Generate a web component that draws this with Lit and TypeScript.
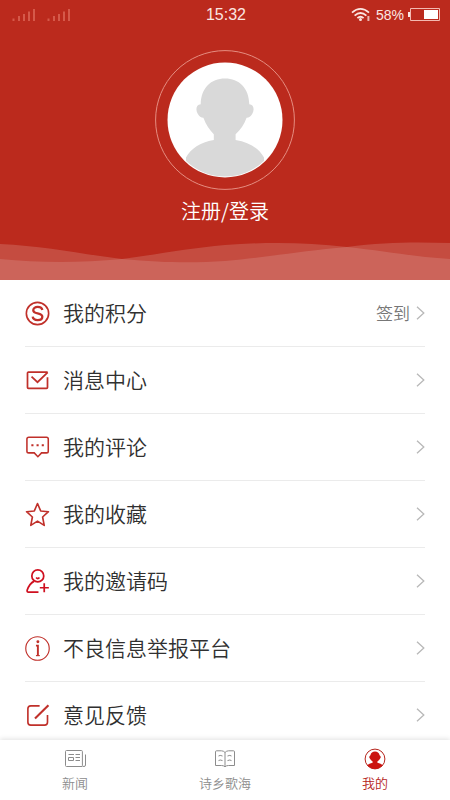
import { LitElement, html, css, svg, type TemplateResult } from "lit";
import { customElement, state } from "lit/decorators.js";

const signalBars = html`<svg width="24" height="14" viewBox="0 0 24 14" aria-hidden="true">
  <path d="M1.5 13V10.5M7 13V8M12 13V6M17 13V3.5M22 13V1" stroke="#d5594a" stroke-width="2" fill="none" />
</svg>`;

const menuIcons: Record<string, TemplateResult> = {
  points: svg`<circle cx="13" cy="13" r="11.6" stroke-width="1.7"/>
    <path d="M18 9.4C17.6 7.2 15.9 6.2 13.2 6.2C10.5 6.2 8.6 7.5 8.6 9.5C8.6 11.7 10.5 12.2 13.2 12.8C16.2 13.4 18 14.1 18 16.3C18 18.6 16 19.8 13.2 19.8C10.1 19.8 8.3 18.5 8 16.2" stroke-width="2.4"/>`,
  mail: svg`<path d="M23.5 4.4H3.5Q2.6 4.4 2.6 5.4V20.2Q2.6 21.2 3.6 21.2H22.4Q23.4 21.2 23.4 20.2V9.5" stroke-width="1.8"/>
    <path d="M6.8 9L13 14.8L23.6 4.6" stroke-width="1.8"/>`,
  comment: svg`<path d="M4 2.4H22.4Q24.2 2.4 24.2 4.2V16.8Q24.2 18.6 22.4 18.6H17.2L13.4 22.6L9.6 18.6H4Q2 18.6 2 16.8V4.2Q2 2.4 4 2.4Z" stroke-width="1.6"/>
    <path d="M6.6 9.5h2.2v2.2h-2.2zM12 9.5h2.2v2.2h-2.2zM17.4 9.5h2.2v2.2h-2.2z" fill="currentColor" stroke="none"/>`,
  star: svg`<path d="M13 1.6L16.3 9.3L24.4 10.1L18.3 15.6L20 24.3L13 19.9L6 24.3L7.7 15.6L1.6 10.1L9.7 9.3Z" stroke-width="1.7" stroke-linejoin="round"/>`,
  invite: svg`<g stroke="#cf1020" stroke-width="1.8"><circle cx="13.3" cy="7.2" r="6.2"/>
    <path d="M11.6 8.8Q13.3 11 15 8.8" />
    <path d="M9.6 12.6C5.8 14.5 3.6 18 2.2 22.2Q2 24 3.5 24H14M20 14.8V24.2M15.4 19.5H24.8"/></g>`,
  info: svg`<circle cx="13" cy="13" r="12.2" stroke-width="1.2"/>
    <path d="M11.4 10H13.4V20.4" stroke-width="2"/><path d="M11.4 20.4H15.4" stroke-width="1.2"/><circle cx="13.4" cy="6" r="1.5" fill="currentColor" stroke="none"/>`,
  edit: svg`<path d="M15.2 3H6Q3 3 3 6V20Q3 23 6 23H20.4Q23.4 23 23.4 20V12.4" stroke-width="1.7"/>
    <path d="M10.4 16L24.4 2.4" stroke-width="2.2"/>`,
};

interface MenuItem {
  icon: string;
  label: string;
  note?: string;
}

const menu: MenuItem[] = [
  { icon: "points", label: "我的积分", note: "签到" },
  { icon: "mail", label: "消息中心" },
  { icon: "comment", label: "我的评论" },
  { icon: "star", label: "我的收藏" },
  { icon: "invite", label: "我的邀请码" },
  { icon: "info", label: "不良信息举报平台" },
  { icon: "edit", label: "意见反馈" },
];

const tabs = [
  {
    label: "新闻",
    icon: svg`<path d="M18.4 18.5H2.5Q1.5 18.5 1.5 17.5V3.5Q1.5 2.5 2.5 2.5H17.4Q18.4 2.5 18.4 3.5V17.5Q18.4 18.5 20 18.5Q21.5 18.5 21.5 17V6.5"/>
      <path d="M4.5 6.5H10M11.5 6.5H16M4.5 9.5H9.5V12.5H4.5ZM11.5 9.5H16M11.5 12.5H16"/>`,
  },
  {
    label: "诗乡歌海",
    icon: svg`<path d="M11 4.5Q9.5 2.8 7.5 2.8H2.5Q1.5 2.8 1.5 3.8V17.5H7.5Q9.7 17.5 11 18.8Q12.3 17.5 14.5 17.5H20.5V3.8Q20.5 2.8 19.5 2.8H14.5Q12.5 2.8 11 4.5V18"/>
      <path d="M4.5 8L6.2 7.4L8.5 8M4.5 12.6L6.2 12L8.5 12.6M13.5 8L15.8 7.4L17.5 8M13.5 12.6L15.8 12L17.5 12.6"/>`,
  },
  {
    label: "我的",
    icon: svg`<circle cx="11" cy="11" r="9.9"/>
      <path d="M11 3.6C13.4 3.6 15 4.8 15.6 7.2Q17.2 8.4 16.6 9.8Q15.4 12.2 13.4 13.6V14.8C15.8 15.2 17.6 16.1 18.7 17.3Q15.6 20.9 11 20.9Q6.4 20.9 3.3 17.3C4.4 16.1 6.2 15.2 8.6 14.8V13.6Q6.6 12.2 5.4 9.8Q4.8 8.4 6.4 7.2C7 4.8 8.6 3.6 11 3.6Z" fill="#cb1410" stroke="none"/>`,
  },
];

@customElement("app-root")
export class AppRoot extends LitElement {
  @state() private active = 2;

  static styles = css`
    :host {
      display: flex;
      flex-direction: column;
      height: 100vh;
      background: #fff;
      color: #303030;
      font-family: "Noto Sans CJK SC", sans-serif;
      font-weight: 350;
    }
    * {
      box-sizing: border-box;
    }
    svg {
      display: block;
      flex: none;
    }
    button {
      border: 0;
      padding: 0;
      background: none;
      color: inherit;
      font: inherit;
      cursor: pointer;
    }
    .hero {
      flex: none;
      background: #bb2a1d;
      color: #fff;
    }
    .status {
      display: grid;
      grid-template-columns: 1fr auto 1fr;
      align-items: center;
      height: 30px;
      padding: 0 10px 0 12px;
      font-family: "Liberation Sans", Roboto, sans-serif;
      font-weight: 400;
      font-size: 16px;
      color: #fbe6e1;
    }
    .signals {
      display: flex;
      gap: 11px;
    }
    .power {
      display: flex;
      align-items: center;
      justify-content: flex-end;
      gap: 4px;
      font-size: 14px;
    }
    .login {
      display: flex;
      flex-direction: column;
      align-items: center;
      gap: 6px;
      margin: 20px auto 0;
      font-size: 20px;
      line-height: 30px;
    }
    .waves {
      width: 100%;
      height: 40px;
      margin-top: 14px;
    }
    .menu {
      flex: 1;
      min-height: 0;
      margin: 0;
      padding: 0 25px;
      overflow-y: auto;
      scrollbar-width: none;
      list-style: none;
    }
    .row {
      display: flex;
      align-items: center;
      width: 100%;
      height: 67px;
      border-bottom: 1px solid #ebebeb;
      font-size: 21px;
      line-height: 30px;
      text-align: left;
    }
    .glyph {
      margin-right: 13px;
      color: #c0302a;
    }
    .label {
      flex: 1;
      padding-bottom: 2px;
    }
    .note {
      margin-right: 6px;
      font-size: 17px;
      color: #777;
    }
    .tabs {
      position: relative;
      display: flex;
      flex: none;
      height: 60px;
      background: #fff;
      box-shadow: 0 -1px 5px rgba(0, 0, 0, 0.12);
    }
    .tab {
      display: flex;
      flex: 1;
      flex-direction: column;
      align-items: center;
      gap: 3px;
      padding-top: 8px;
      font-size: 13px;
      line-height: 20px;
      color: #8c8c8c;
    }
    .tab.on {
      color: #b5231a;
    }
  `;

  render() {
    return html`
      <header class="hero">
        <div class="status">
          <div class="signals">${signalBars}${signalBars}</div>
          <span>15:32</span>
          <div class="power">
            <svg width="21" height="16" viewBox="0 0 21 16" fill="none" stroke="currentColor" stroke-width="1.8" aria-hidden="true">
              <path d="M1 5.6Q9.5 -1.8 18 5.6M3.6 8.6Q9.5 3.4 15.4 8.6M6.4 11.2Q9.5 8.4 12.6 11.2" />
              <circle cx="9.5" cy="12.6" r="1.5" fill="currentColor" stroke="none" />
              <path d="M17.4 9V14" stroke-width="2" opacity=".75" />
            </svg>
            <span>58%</span>
            <svg width="32" height="14" viewBox="0 0 32 14" aria-hidden="true">
              <path d="M2.5 .5H31.5V12.5H2.5Z" fill="none" stroke="#f3b9b0" />
              <path d="M0 4H2V9H0Z" fill="#fbe6e1" />
              <path d="M16 2H30V11H16Z" fill="#fff" />
            </svg>
          </div>
        </div>
        <button class="login">
          <svg width="140" height="140" viewBox="0 0 140 140" aria-hidden="true">
            <defs><clipPath id="face"><circle cx="70" cy="70" r="56.5" /></clipPath></defs>
            <circle cx="70" cy="70" r="69.4" fill="none" stroke="#e58d81" />
            <circle cx="70" cy="70" r="57.5" fill="#fff" />
            <path clip-path="url(#face)" fill="#d9d9d9"
              d="M70 28.5C84 28.5 94 38 94.3 54.2C99 54.5 99.6 60 97.3 63.8C95.8 66.4 94 67.6 91.6 67.8C89 75 85.5 80 80.6 84.2V90C95 92.5 104 98.5 109 107.5V128H31V107.5C36 98.5 45 92.5 58.8 90V84.2C54.5 80 51 75 48.4 67.8C46 67.6 44.2 66.4 42.7 63.8C40.4 60 41 54.5 45.7 54.2C46 38 56 28.5 70 28.5Z" />
          </svg>
          <span>注册/登录</span>
        </button>
        <svg class="waves" viewBox="0 0 450 40" preserveAspectRatio="none" aria-hidden="true">
          <g fill="#e0a79f" fill-opacity=".28">
            <path d="M0 4C45 6 80 14 122 19C165 23 195 23 225 21C270 17 300 11 347 7C385 2 415 2 450 3V40H0Z" />
            <path d="M0 19C40 23 80 23 122 19C160 14 190 8 225 5C265 2 305 2 347 7C385 11 415 17 450 19V40H0Z" />
          </g>
        </svg>
      </header>
      <ul class="menu">
        ${menu.map(
          (item) => html`<li>
            <button class="row">
              <svg class="glyph" width="25" height="25" viewBox="0 0 26 26" fill="none" stroke="currentColor" aria-hidden="true">${menuIcons[item.icon]}</svg>
              <span class="label">${item.label}</span>
              ${item.note ? html`<span class="note">${item.note}</span>` : null}
              <svg width="9" height="14" viewBox="0 0 9 14" fill="none" stroke="#b8b8b8" stroke-width="1.3" aria-hidden="true"><path d="M1 .7L7.8 7L1 13.3" /></svg>
            </button>
          </li>`,
        )}
      </ul>
      <nav class="tabs">
        ${tabs.map(
          (tab, i) => html`<button class="tab ${i === this.active ? "on" : ""}" @click=${() => (this.active = i)}>
            <svg width="22" height="22" viewBox="0 0 22 22" fill="none" stroke="currentColor" aria-hidden="true">${tab.icon}</svg>
            <span>${tab.label}</span>
          </button>`,
        )}
      </nav>
    `;
  }
}
